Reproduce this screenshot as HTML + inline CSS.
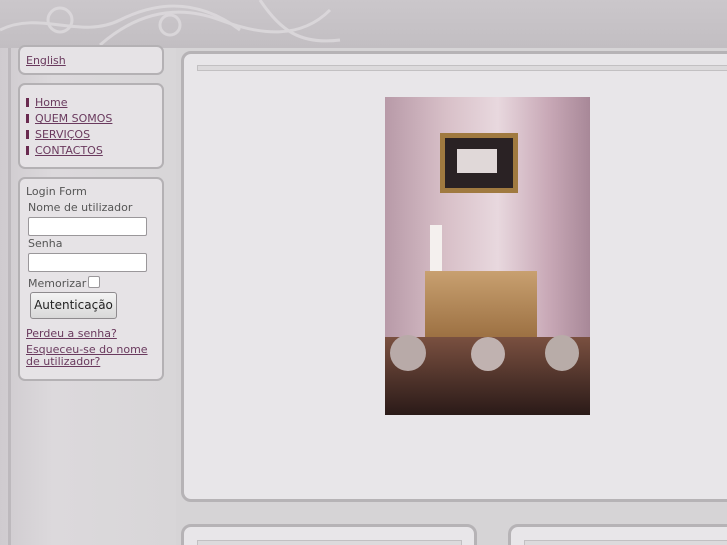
<!DOCTYPE html>
<html style="width:727px;height:545px;overflow:hidden"><head><meta charset="utf-8"><style>
*{margin:0;padding:0;box-sizing:border-box}
body{width:727px;height:545px;overflow:hidden;background:#d6d4d6;font-family:"DejaVu Sans","Liberation Sans",sans-serif;font-size:11px;color:#555;position:relative}
.top{position:absolute;left:0;top:0;width:727px;height:48px;background:linear-gradient(#cbc7cb,#c2bec2)}
.leftbg{position:absolute;left:0;top:48px;width:176px;height:497px;background:linear-gradient(90deg,#cfcbcf,#dcd9dc 30%,#d8d6d8)}
.edge{position:absolute;left:8px;top:48px;width:3px;height:497px;background:#bdb9bd}
.p{position:absolute;left:18px;width:146px;background:#e6e3e6;border:2px solid #b4b1b4;border-radius:7px}
a{color:#6a3a5e;text-decoration:underline}
.m{position:absolute;background:#e8e6e9;border:3px solid #b6b3b6;border-radius:10px}
.bar{position:absolute;height:6px;background:#dcdadc;border:1px solid #c2c0c2}
.li{position:absolute;left:6px}
.li:before{content:"";display:inline-block;width:3px;height:9px;background:#6a2a50;margin-right:6px;vertical-align:-1px}
input.t{position:absolute;left:8px;width:119px;height:19px;border:1px solid #9a979a;border-radius:2px;background:#fff}
</style></head><body>
<div class="top"></div>
<svg style="position:absolute;left:0;top:0" width="400" height="200" fill="none" stroke="#e2dfe2" stroke-width="3" opacity=".7">
<path d="M0 30 C40 10 80 40 120 20 S200 0 240 30"/><path d="M100 45 C140 10 180 5 220 20 S300 40 330 10"/><path d="M260 0 C280 30 300 45 340 40"/><circle cx="60" cy="20" r="12"/><circle cx="170" cy="25" r="10"/><path d="M0 120 C20 100 10 80 30 70"/>
</svg>
<div class="leftbg"></div><div class="edge"></div>
<div class="p" style="top:45px;height:30px"><a style="position:absolute;left:6px;top:7px">English</a></div>
<div class="p" style="top:83px;height:86px">
<a class="li" style="top:11px">Home</a><a class="li" style="top:27px">QUEM SOMOS</a><a class="li" style="top:43px">SERVIÇOS</a><a class="li" style="top:59px">CONTACTOS</a></div>
<div class="p" style="top:177px;height:204px">
<div style="position:absolute;left:6px;top:6px">Login Form</div>
<div style="position:absolute;left:8px;top:22px">Nome de utilizador</div>
<input class="t" style="top:38px">
<div style="position:absolute;left:8px;top:58px">Senha</div>
<input class="t" style="top:74px">
<div style="position:absolute;left:8px;top:98px">Memorizar</div>
<div style="position:absolute;left:68px;top:97px;width:12px;height:12px;border:1px solid #9a979a;background:#fff;border-radius:2px"></div>
<div style="position:absolute;left:10px;top:113px;width:87px;height:27px;border:1px solid #8e8b8e;border-radius:3px;background:linear-gradient(#f4f4f4,#d8d8d8);color:#222;font-size:12px;text-align:center;line-height:25px">Autenticação</div>
<a style="position:absolute;left:6px;top:148px">Perdeu a senha?</a>
<a style="position:absolute;left:6px;top:165px;line-height:12px">Esqueceu-se do nome<br>de utilizador?</a>
</div>
<div class="m" style="left:181px;top:51px;width:560px;height:451px"></div>
<div class="bar" style="left:197px;top:65px;width:540px"></div>
<div style="position:absolute;left:385px;top:97px;width:205px;height:318px;background:linear-gradient(90deg,#b89aa8,#d8c0c8 30%,#e8d8de 55%,#c8a8b6 80%,#a88898);overflow:hidden">
<div style="position:absolute;left:55px;top:36px;width:78px;height:60px;border:5px solid #a07a40;background:#2a2224"></div>
<div style="position:absolute;left:72px;top:52px;width:40px;height:24px;background:#e0d8d8"></div>
<div style="position:absolute;left:45px;top:128px;width:12px;height:46px;background:#f4f0ee"></div>
<div style="position:absolute;left:40px;top:174px;width:112px;height:70px;background:linear-gradient(#c8a070,#9a6e40)"></div>
<div style="position:absolute;left:0;top:240px;width:205px;height:78px;background:linear-gradient(#7a5040,#2a1a18)"></div>
<div style="position:absolute;left:5px;top:238px;width:36px;height:36px;border-radius:50%;background:#b8aaa8"></div>
<div style="position:absolute;left:86px;top:240px;width:34px;height:34px;border-radius:50%;background:#c0b2b0"></div>
<div style="position:absolute;left:160px;top:238px;width:34px;height:36px;border-radius:50%;background:#b8aca8"></div>
</div>
<div style="position:absolute;left:0;top:524px;width:727px;height:21px;overflow:hidden">
<div class="m" style="left:181px;top:0;width:296px;height:40px"></div>
<div class="bar" style="left:197px;top:16px;width:265px"></div>
<div class="m" style="left:508px;top:0;width:240px;height:40px"></div>
<div class="bar" style="left:524px;top:16px;width:210px"></div>
</div>
</body></html>
